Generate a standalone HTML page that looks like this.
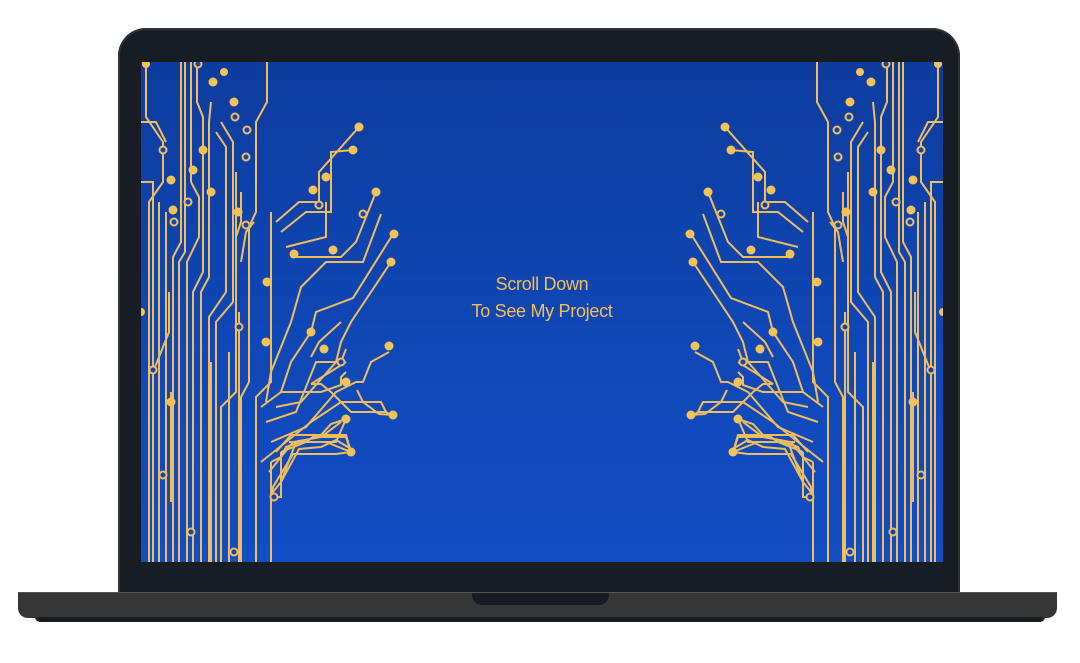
<!DOCTYPE html>
<html><head><meta charset="utf-8"><style>
html,body{margin:0;padding:0;background:#fff;width:1080px;height:663px;overflow:hidden;position:relative}
.lid{position:absolute;left:118px;top:28px;width:842px;height:566px;background:#171d22;border-radius:28px 28px 0 0;box-shadow:inset 0 0 0 2px #2c3236}
.screen{position:absolute;left:141px;top:62px;width:802px;height:500px;background:linear-gradient(180deg,#0d3c9e 0%,#1048b8 60%,#124dc3 100%);overflow:hidden}
.base{position:absolute;left:18px;top:592px;width:1039px;height:25px;background:#363636;border-radius:0 0 10px 10px;border-top:1px solid #555}
.foot{position:absolute;left:35px;top:617px;width:1010px;height:5px;background:#171d22;border-radius:0 0 6px 6px}
.notch{position:absolute;left:472px;top:593px;width:137px;height:12px;background:#171d22;border-radius:0 0 10px 10px}
.txt{position:absolute;left:0;width:802px;top:209px;text-align:center;color:#f3bf55;font:18px/27px "Liberation Sans",sans-serif;letter-spacing:-0.3px}
svg{position:absolute;left:0;top:0}
</style></head><body>
<div class="lid"></div>
<div class="screen">
<svg width="802" height="500" viewBox="0 0 802 500">
<defs>
<g id="c" fill="none" stroke="#f0bd5c" stroke-width="2">
<path d="M5,0 L5,55 L22,80 L22,120 L8,140 L8,500"/>
<path d="M0,60 L15,60 L25,80"/>
<path d="M0,120 L12,120 L12,500"/>
<path d="M18,140 L18,500"/>
<path d="M25,150 L25,500"/>
<path d="M40,0 L40,180 L32,195 L32,500"/>
<path d="M44,0 L44,190 L38,200 L38,500"/>
<path d="M50,0 L50,120 L58,135 L58,175 L46,200 L46,500"/>
<path d="M56,0 L56,40 L62,55 L62,210 L52,230 L52,500"/>
<path d="M70,40 L68,60 L68,215 L60,230 L60,500"/>
<path d="M75,70 L85,85 L85,230 L68,255 L68,500"/>
<path d="M80,60 L92,80 L92,240 L75,260 L75,500"/>
<path d="M95,110 L95,330 L80,345 L80,500"/>
<path d="M100,130 L100,160 L95,175"/>
<path d="M126,0 L126,40 L115,60 L115,150 L108,165 L108,320 L100,335 L100,500"/>
<path d="M130,150 L130,320 L115,335 L115,500"/>
<path d="M135,160 L158,140 L178,140 L178,110 L218,65"/>
<path d="M140,170 L165,150 L190,150 L190,90 L212,88"/>
<path d="M145,185 L185,175 L185,140"/>
<path d="M150,195 L200,195 L215,180 L235,130"/>
<path d="M125,340 L130,310 L150,260 L160,225 L180,205 L185,200 L222,200 L240,152"/>
<path d="M120,345 L140,330 L150,300 L170,270 L175,250 L212,236 L252,172"/>
<path d="M135,345 L160,340 L195,300 L200,280 L210,260 L250,200"/>
<path d="M125,360 L155,350 L175,300 L200,300 L205,287"/>
<path d="M130,380 L165,365 L195,330 L215,320 L222,320 L230,300 L248,290"/>
<path d="M120,400 L170,360 L200,340 L240,340 L245,350 L252,355"/>
<path d="M170,322 L205,300"/>
<path d="M140,330 L180,330 L200,323 L200,315 L205,310"/>
<path d="M130,400 L140,395 L145,385 L160,380"/>
<path d="M130,400 L130,500"/>
<path d="M140,390 L140,420 L155,380 L195,380 L205,357"/>
<path d="M140,390 L165,380 L172,375 L205,375 L210,390"/>
<path d="M140,395 L140,435 L133,435"/>
<path d="M128,410 L152,380 L180,375 L200,360"/>
<path d="M170,322 L180,322 L190,330 L210,350 L232,350 L245,350"/>
<path d="M216,328 L222,340 L238,352 L253,353"/>
<path d="M135,390 L150,373 L180,373 L190,362 L205,357"/>
<path d="M148,380 L185,380 L210,390"/>
<path d="M165,373 L205,373 L210,390"/>
<path d="M132,430 L140,420 L158,387 L180,385 L195,378 L212,388"/>
<path d="M130,440 L132,425 L152,392 L195,392 L210,390"/>
<path d="M170,295 L178,280 L200,260"/>
<path d="M28,230 L28,270 L12,310"/>
<path d="M30,330 L30,440"/>
<path d="M100,200 L105,170 L113,160"/>
<path d="M98,250 L98,500"/>
<path d="M88,290 L88,500"/>
<path d="M70,300 L70,500"/>
</g>
<g id="d" fill="#f3c358">
<circle cx="5" cy="2" r="4"/><circle cx="72" cy="20" r="4.5"/><circle cx="83" cy="10" r="4"/>
<circle cx="93" cy="40" r="4.5"/><circle cx="62" cy="88" r="4.5"/><circle cx="52" cy="108" r="4.5"/>
<circle cx="70" cy="130" r="4.5"/><circle cx="32" cy="148" r="4.5"/><circle cx="0" cy="250" r="4"/>
<circle cx="218" cy="65" r="4.5"/><circle cx="212" cy="88" r="4.5"/><circle cx="185" cy="115" r="4.5"/>
<circle cx="172" cy="128" r="4.5"/><circle cx="235" cy="130" r="4.5"/><circle cx="253" cy="172" r="4.5"/>
<circle cx="250" cy="200" r="4.5"/><circle cx="192" cy="188" r="4.5"/><circle cx="153" cy="192" r="4.5"/>
<circle cx="126" cy="220" r="4.5"/><circle cx="170" cy="270" r="4.5"/><circle cx="248" cy="284" r="4.5"/>
<circle cx="183" cy="287" r="4.5"/><circle cx="205" cy="320" r="4.5"/><circle cx="252" cy="353" r="4.5"/>
<circle cx="205" cy="357" r="4.5"/><circle cx="210" cy="390" r="4.5"/><circle cx="30" cy="340" r="4.5"/>
<circle cx="125" cy="280" r="4.5"/><circle cx="30" cy="118" r="4.5"/><circle cx="97" cy="150" r="4.5"/>
</g>
<g id="r" fill="#1046b4" stroke="#f0bd5c" stroke-width="2">
<circle cx="57" cy="2" r="3.5"/><circle cx="94" cy="55" r="3.5"/><circle cx="106" cy="68" r="3.5"/>
<circle cx="105" cy="95" r="3.5"/><circle cx="22" cy="88" r="3.5"/><circle cx="47" cy="140" r="3.5"/>
<circle cx="33" cy="160" r="3.5"/><circle cx="105" cy="163" r="3.5"/><circle cx="178" cy="143" r="3.5"/>
<circle cx="222" cy="152" r="3.5"/><circle cx="200" cy="300" r="3.5"/><circle cx="133" cy="435" r="3.5"/>
<circle cx="98" cy="265" r="3.5"/><circle cx="12" cy="308" r="3.5"/><circle cx="22" cy="413" r="3.5"/>
<circle cx="50" cy="470" r="3.5"/><circle cx="93" cy="490" r="3.5"/>
</g>
</defs>
<use href="#c"/><use href="#r"/><use href="#d"/>
<g transform="translate(802,0) scale(-1,1)"><use href="#c"/><use href="#r"/><use href="#d"/></g>
</svg>
<div class="txt">Scroll Down<br>To See My Project</div>
</div>
<div class="base"></div>
<div class="foot"></div>
<div class="notch"></div>
</body></html>
